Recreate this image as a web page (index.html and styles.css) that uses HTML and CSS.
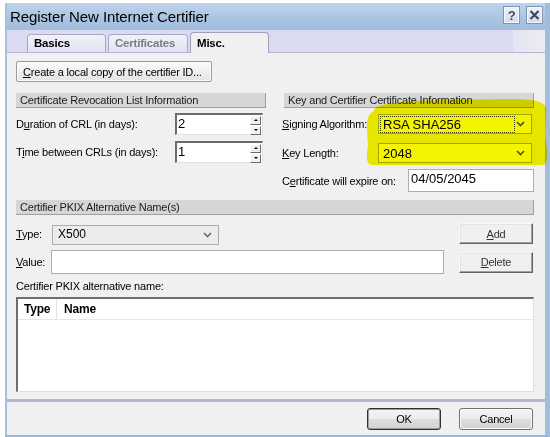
FILE: index.html
```html
<!DOCTYPE html>
<html lang="en">
<head>
  <meta charset="UTF-8" />
  <title>Register New Internet Certifier</title>
  <link rel="stylesheet" href="styles.css">
</head>
<body>
  <div class="window">
    <div class="titlebar">
      <span class="title">Register New Internet Certifier</span>
      <div class="caption-btns">
        <span class="cap-btn">?</span>
        <span class="cap-btn">
          <svg width="11" height="10" viewBox="0 0 11 10"><path d="M1.5 1 L9.5 9 M9.5 1 L1.5 9" stroke="#3d4a5e" stroke-width="2.2" /></svg>
        </span>
      </div>
    </div>

    <div class="tabs">
      <div class="tab">Basics</div>
      <div class="tab dim">Certificates</div>
      <div class="tab active">Misc.</div>
    </div>

    <div class="panel">
      <button class="btn create"><u>C</u>reate a local copy of the certifier ID...</button>

      <div class="cols">
        <div class="col">
          <div class="section">Certificate Revocation List Information</div>
          <div class="row first">
            <label class="lbl-crl">D<u>u</u>ration of CRL (in days):</label>
            <div class="spin">
              <span class="spin-val">2</span>
              <div class="spin-btns">
                <span class="spin-up"></span>
                <span class="spin-down"></span>
              </div>
            </div>
          </div>
          <div class="row">
            <label class="lbl-crl">T<u>i</u>me between CRLs (in days):</label>
            <div class="spin">
              <span class="spin-val">1</span>
              <div class="spin-btns">
                <span class="spin-up"></span>
                <span class="spin-down"></span>
              </div>
            </div>
          </div>
        </div>

        <div class="col">
          <div class="section right">Key and Certifier Certificate Information</div>
          <div class="row first">
            <label class="lbl-key"><u>S</u>igning Algorithm:</label>
            <div class="combo marked">
              <span class="combo-val focus">RSA SHA256</span>
              <svg class="chev" width="9" height="6" viewBox="0 0 9 6"><path d="M1 1 L4.5 4.5 L8 1" fill="none" stroke="#4d5a5a" stroke-width="1.6" /></svg>
            </div>
          </div>
          <div class="row mid">
            <label class="lbl-key"><u>K</u>ey Length:</label>
            <div class="combo marked">
              <span class="combo-val">2048</span>
              <svg class="chev" width="9" height="6" viewBox="0 0 9 6"><path d="M1 1 L4.5 4.5 L8 1" fill="none" stroke="#4d5a5a" stroke-width="1.6" /></svg>
            </div>
          </div>
          <div class="row last">
            <label class="lbl-exp">C<u>e</u>rtificate will expire on:</label>
            <div class="textbox expire">04/05/2045</div>
          </div>
        </div>
      </div>

      <div class="section pkix">Certifier PKIX Alternative Name(s)</div>
      <div class="row type-row">
        <label class="lbl-type"><u>T</u>ype:</label>
        <div class="combo type">
          <span class="combo-val">X500</span>
          <svg class="chev" width="9" height="6" viewBox="0 0 9 6"><path d="M1 1 L4.5 4.5 L8 1" fill="none" stroke="#6a6a6a" stroke-width="1.6" /></svg>
        </div>
        <button class="btn flat side"><u>A</u>dd</button>
      </div>
      <div class="row value-row">
        <label class="lbl-value"><u>V</u>alue:</label>
        <div class="textbox value"></div>
        <button class="btn flat side"><u>D</u>elete</button>
      </div>
      <div class="list-caption">Certifier PKIX alternative name:</div>
      <div class="listbox">
        <div class="list-head">
          <span class="col-type">Type</span>
          <span class="col-name">Name</span>
        </div>
      </div>
    </div>

    <div class="footer">
      <button class="btn default">OK</button>
      <button class="btn">Cancel</button>
    </div>

    <svg class="marker" width="190" height="76" viewBox="0 0 190 76">
      <path d="M12 16 C10 9, 40 6, 80 5 L150 4 C176 4, 184 8, 184 14 L183 40 C185 55, 187 68, 181 70 L10 70 C4 70, 4 60, 6 50 L5 35 C4 25, 7 18, 12 16 Z" fill="#f4f400" />
    </svg>
  </div>
</body>
</html>
```

FILE: styles.css
```css
body {
  margin: 0;
  width: 550px;
  height: 437px;
  overflow: hidden;
  background: #fff;
  font-family: 'Liberation Sans', Arial, sans-serif;
  font-size: 11px;
  letter-spacing: -0.2px;
  color: #000;
}
u {
  text-decoration: underline;
  text-underline-offset: 1px;
}
.window {
  position: relative;
  margin: 3px 0 0 5px;
  width: 538px;
  height: 432px;
  border-left: 2px solid #a6c0de;
  border-right: 5px solid #a2bcdc;
  border-bottom: 2px solid #9ab6d8;
  display: flex;
  flex-direction: column;
}
.titlebar {
  height: 27px;
  display: flex;
  align-items: center;
  justify-content: space-between;
  background: linear-gradient(#c0d5ec, #a9c3e1 60%, #a2bddd);
  padding: 0 2px 0 3px;
}
.title {
  font-family: 'Liberation Sans', Arial, sans-serif;
  font-size: 15px;
  letter-spacing: -0.1px;
  color: #000;
  padding-bottom: 1px;
}
.caption-btns {
  display: flex;
  gap: 6px;
  margin-top: -3px;
}
.cap-btn {
  width: 15px;
  height: 16px;
  border: 1px solid #7d94b4;
  background: linear-gradient(#eef2f8, #d3dceb);
  display: flex;
  align-items: center;
  justify-content: center;
  font-weight: bold;
  font-size: 13px;
  color: #3d4a5e;
  box-shadow: inset 0 0 0 1px #f6f8fc;
}
.tabs {
  height: 23px;
  box-sizing: border-box;
  background: linear-gradient(90deg, #dadaf0 94%, #e4e4f2 94%, #ececf2);
  border-bottom: 1px solid #b4b4d2;
  display: flex;
  align-items: flex-end;
  padding-left: 20px;
  gap: 2px;
}
.tab {
  height: 18px;
  box-sizing: border-box;
  width: 79px;
  padding-left: 6px;
  border: 1px solid #a8a8c4;
  border-bottom: none;
  border-radius: 4px 4px 0 0;
  background: linear-gradient(#f2f2fa, #e2e2f2);
  font-weight: bold;
  font-size: 11.5px;
  line-height: 17px;
  margin-bottom: 0;
}
.tab.dim {
  width: 80px;
  color: #7c7c88;
}
.tab.active {
  height: 21px;
  width: 79px;
  background: #f0f0f0;
  border-color: #a0a0bc;
  margin-bottom: -1px;
  line-height: 21px;
}
.panel {
  height: 346px;
  box-sizing: border-box;
  background: #f0f0f0;
  padding: 8px 11px 0 9px;
  display: flex;
  flex-direction: column;
}
.btn {
  font-family: 'Liberation Sans', Arial, sans-serif;
  font-size: 11px;
  letter-spacing: -0.2px;
  color: #000;
  height: 22px;
  width: 74px;
  padding: 0;
  border: 1px solid #707070;
  border-radius: 3px;
  background: linear-gradient(#f4f4f4, #ececec 48%, #dedede 52%, #d2d2d2);
  box-shadow: inset 0 0 0 1px #fbfbfb;
}
.btn.create {
  width: 196px;
  height: 21px;
  text-align: left;
  padding-left: 6px;
  border-color: #9a9a9a;
  border-radius: 2px;
  background: linear-gradient(#fbfbfb, #efefef 50%, #e4e4e4);
  margin-bottom: 11px;
}
.btn.flat {
  border-radius: 0;
  border-color: #f8f8f8 #646464 #646464 #f8f8f8;
  background: #f0f0f0;
  box-shadow: inset -1px -1px 0 #a0a0a0, inset 1px 1px 0 #e4e4e4;
  color: #333;
}
.btn.default {
  border-color: #303030;
  box-shadow: inset 0 0 0 1px #9a9a9a;
}
.cols {
  display: grid;
  grid-template-columns: 250px 1fr;
  column-gap: 16px;
}
.section {
  height: 14px;
  line-height: 14px;
  background: #d6d6d6;
  border-right: 1px solid #a0a0a0;
  border-bottom: 1px solid #a0a0a0;
  padding-left: 4px;
  color: #1a1a1a;
}
.section.right {
  margin-left: 2px;
}
.row {
  display: flex;
  align-items: center;
}
.row.first {
  margin-top: 5px;
  height: 22px;
}
.col .row + .row {
  margin-top: 6px;
  height: 22px;
}
.col .row.mid {
  margin-top: 8px;
  height: 20px;
}
.col .row.first + .row.mid {
  margin-top: 8px;
}
.col .row.last {
  margin-top: 6px;
  height: 23px;
}
.lbl-crl {
  width: 159px;
}
.lbl-key {
  width: 96px;
}
.lbl-exp {
  width: 126px;
}
.spin {
  width: 88px;
  height: 22px;
  box-sizing: border-box;
  background: #fff;
  border-top: 2px solid #6c6c6c;
  border-left: 2px solid #6c6c6c;
  border-right: 1px solid #e2e2e2;
  border-bottom: 1px solid #e2e2e2;
  display: flex;
  justify-content: space-between;
  align-items: flex-start;
  padding: 0 1px 0 1px;
}
.spin-val {
  font-size: 13px;
  line-height: 17px;
}
.spin-btns {
  display: flex;
  flex-direction: column;
  gap: 1px;
  margin-top: 1px;
}
.spin-up,
.spin-down {
  position: relative;
  width: 9px;
  height: 7px;
  background: #f0f0f0;
  border: 1px solid;
  border-color: #fff #6c6c6c #6c6c6c #fff;
}
.spin-up::after,
.spin-down::after {
  content: "";
  position: absolute;
  left: 3px;
  top: 2px;
  border-left: 2px solid transparent;
  border-right: 2px solid transparent;
}
.spin-up::after {
  border-bottom: 2px solid #000;
}
.spin-down::after {
  border-top: 2px solid #000;
}
.combo {
  width: 154px;
  height: 20px;
  box-sizing: border-box;
  border: 1px solid #acacac;
  background: #fff;
  display: flex;
  align-items: center;
  justify-content: space-between;
  padding: 0 6px 0 2px;
}
.combo-val {
  font-size: 13px;
  padding: 0 2px;
  line-height: 15px;
  letter-spacing: 0;
}
.combo-val.focus {
  outline: 1px dotted #333;
  width: 129px;
}
.textbox {
  box-sizing: border-box;
  background: #fff;
  border: 1px solid #abadb3;
  font-size: 13px;
  letter-spacing: 0;
  padding: 1px 2px;
}
.textbox.expire {
  width: 126px;
  height: 23px;
}
.section.pkix {
  margin-top: 8px;
}
.type-row {
  margin-top: 8px;
  height: 21px;
}
.lbl-type {
  width: 36px;
}
.combo.type {
  width: 167px;
  background: #ececec;
  margin-top: 2px;
  padding-left: 3px;
}
.combo.type .combo-val {
  font-size: 12px;
}
.btn.side {
  margin-left: auto;
  margin-right: 1px;
  height: 21px;
}
.value-row {
  margin-top: 6px;
  height: 24px;
}
.lbl-value {
  width: 35px;
}
.textbox.value {
  width: 393px;
  height: 24px;
}
.list-caption {
  margin-top: 5px;
  height: 18px;
  line-height: 14px;
}
.listbox {
  height: 95px;
  box-sizing: border-box;
  background: #fff;
  border-top: 2px solid #6e6e6e;
  border-left: 2px solid #6e6e6e;
  border-right: 1px solid #e0e0e0;
  border-bottom: 1px solid #e0e0e0;
}
.list-head {
  display: flex;
  height: 20px;
  border-bottom: 1px solid #e6e6e6;
  font-weight: bold;
  font-size: 12px;
  line-height: 20px;
}
.col-type {
  width: 39px;
  padding-left: 6px;
  box-sizing: border-box;
  border-right: 1px solid #e2e2e2;
}
.col-name {
  padding-left: 7px;
}
.footer {
  flex: 1;
  background: #f0f0f0;
  border-top: 3px solid #b6b6d0;
  display: flex;
  justify-content: flex-end;
  gap: 18px;
  padding: 6px 12px 0 0;
}
.marker {
  position: absolute;
  left: 355px;
  top: 92px;
  mix-blend-mode: multiply;
  pointer-events: none;
}
```
